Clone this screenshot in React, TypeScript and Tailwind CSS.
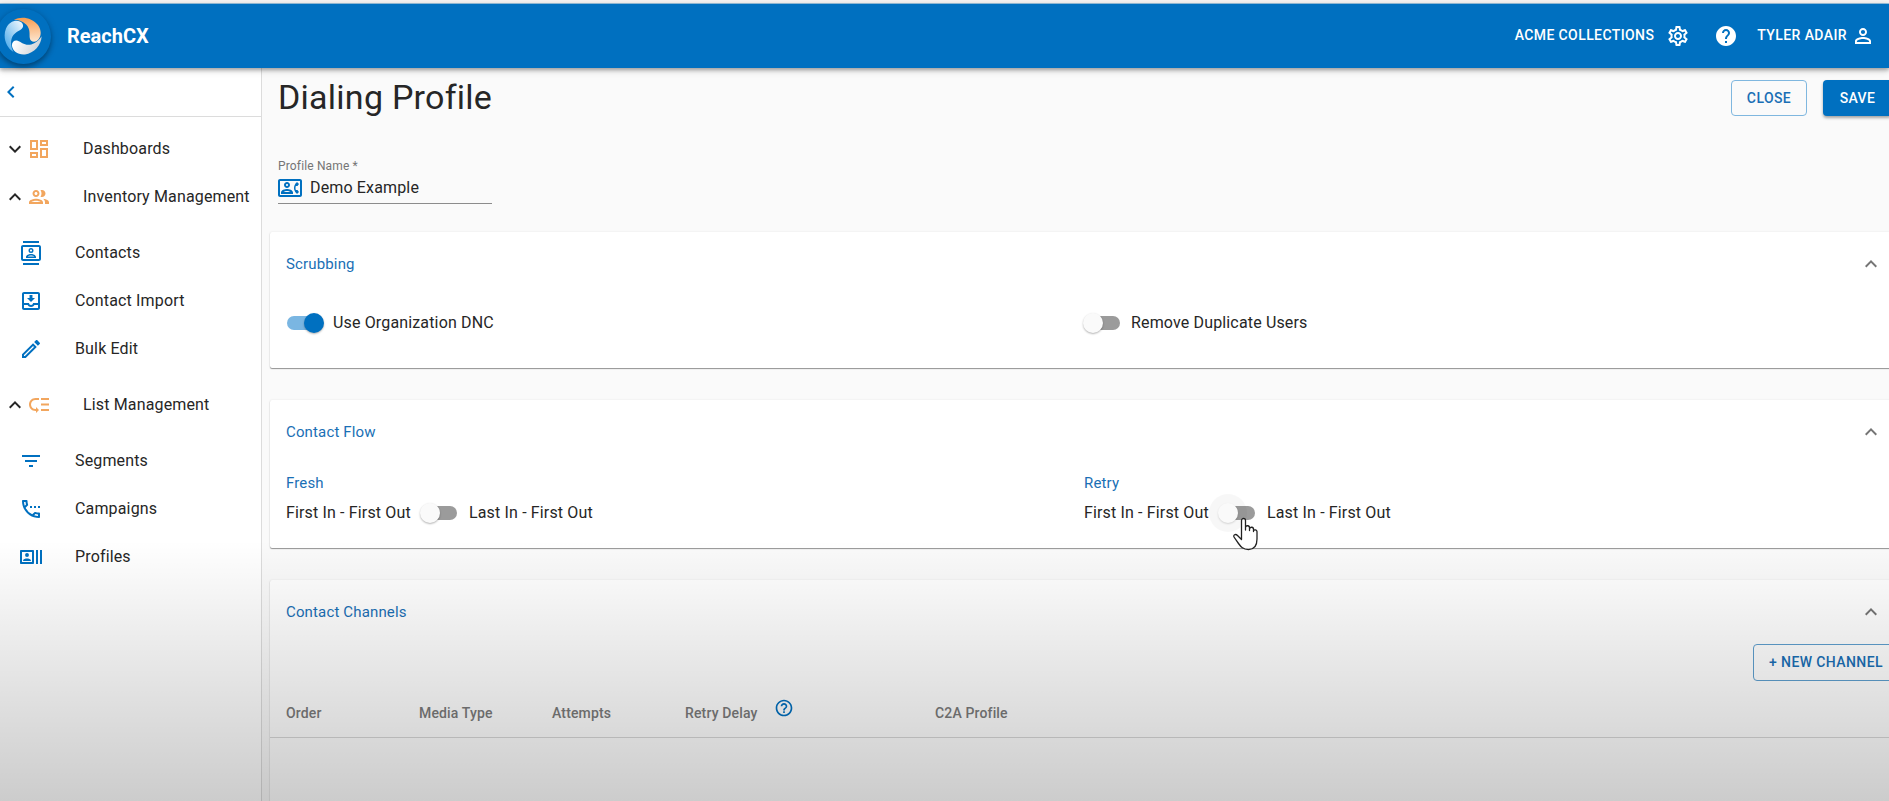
import { useState } from 'react';
import {
  MdChevronLeft,
  MdExpandLess,
  MdExpandMore,
  MdFilterList,
  MdHelp,
  MdHelpOutline,
  MdOutlineContactPhone,
  MdOutlineContacts,
  MdOutlineDashboard,
  MdOutlineEdit,
  MdOutlineGroup,
  MdOutlineLowPriority,
  MdOutlineMoveToInbox,
  MdOutlineRecentActors,
  MdOutlineSettings,
  MdOutlineSettingsPhone,
  MdPersonOutline,
} from 'react-icons/md';
import type { IconType } from 'react-icons';

type NavItem = { label: string; icon: IconType };
type NavGroup = NavItem & { open: boolean; items: NavItem[] };

const groups: NavGroup[] = [
  { label: 'Dashboards', icon: MdOutlineDashboard, open: false, items: [] },
  {
    label: 'Inventory Management',
    icon: MdOutlineGroup,
    open: true,
    items: [
      { label: 'Contacts', icon: MdOutlineContacts },
      { label: 'Contact Import', icon: MdOutlineMoveToInbox },
      { label: 'Bulk Edit', icon: MdOutlineEdit },
    ],
  },
  {
    label: 'List Management',
    icon: MdOutlineLowPriority,
    open: true,
    items: [
      { label: 'Segments', icon: MdFilterList },
      { label: 'Campaigns', icon: MdOutlineSettingsPhone },
      { label: 'Profiles', icon: MdOutlineRecentActors },
    ],
  },
];

// one blade of the logo, the other two are rotated by 120 degrees
const blade =
  'M9.5 35C2 30.500-1.500 20 2 11.500C5 5 11 2.500 16 4.500C19.500 6 20 10 17.500 12C14.500 14.500 9.500 15.500 7.500 22C6.300 27 7.500 31.500 9.500 35Z';

function Logo() {
  return (
    <div className="-ml-1 flex h-[55px] w-[55px] shrink-0 items-center justify-center rounded-full bg-[#0070c0] pr-0.5 shadow-[0_3px_5px_rgba(0,0,0,0.3),0_1px_8px_rgba(0,0,0,0.15)]">
      <svg width="38" height="38" viewBox="0 0 38 38">
        <defs>
          <linearGradient id="blue" x1="0.8" y1="0" x2="0.1" y2="0.8">
            <stop offset="0" stopColor="#e6f3fc" />
            <stop offset="1" stopColor="#58b0ec" />
          </linearGradient>
          <linearGradient id="orange" x1="0.8" y1="0" x2="0.1" y2="0.8">
            <stop offset="0" stopColor="#fde3cb" />
            <stop offset="1" stopColor="#f8994a" />
          </linearGradient>
          <linearGradient id="silver" x1="0.8" y1="0" x2="0.1" y2="0.8">
            <stop offset="0" stopColor="#ffffff" />
            <stop offset="1" stopColor="#cfd3d8" />
          </linearGradient>
        </defs>
        <path d={blade} fill="url(#blue)" />
        <path d={blade} fill="url(#orange)" transform="rotate(120 19 19)" />
        <path d={blade} fill="url(#silver)" transform="rotate(240 19 19)" />
      </svg>
    </div>
  );
}

function Switch({ defaultOn = false, hovered = false }: { defaultOn?: boolean; hovered?: boolean }) {
  const [on, setOn] = useState(defaultOn);
  return (
    <button
      type="button"
      role="switch"
      aria-checked={on}
      onClick={() => setOn(!on)}
      className={`flex h-3.5 w-[34px] shrink-0 items-center rounded-full ${on ? 'justify-end bg-[#7ab6e2]' : 'justify-start bg-[#9b9b9b]'}`}
    >
      <span
        className={`h-5 w-5 shrink-0 rounded-full ${on ? '-mr-[3px] bg-[#0070c0]' : '-ml-[3px] bg-[#fafafa]'} ${
          hovered
            ? 'shadow-[0_0_0_9px_rgba(0,0,0,0.03),0_1px_2px_rgba(0,0,0,0.15)]'
            : 'shadow-[0_1px_2px_rgba(0,0,0,0.3)]'
        }`}
      />
    </button>
  );
}

function Panel({ title, className, children }: { title: string; className: string; children: React.ReactNode }) {
  return (
    <section className={`ml-2 rounded-xs bg-white shadow-[0_1px_1px_rgba(0,0,0,0.4),0_0_2px_rgba(0,0,0,0.1)] ${className}`}>
      <div className="flex h-16 items-center justify-between pr-[29px] pl-4">
        <h2 className="text-[15px] tracking-[0.15px] text-[#1a6fb5]">{title}</h2>
        <MdExpandLess className="text-2xl text-[#757575]" />
      </div>
      {children}
    </section>
  );
}

function FlowColumn({ title, hovered }: { title: string; hovered?: boolean }) {
  return (
    <div>
      <h3 className="h-6 text-[15px] leading-6 tracking-[0.15px] text-[#1a6fb5]">{title}</h3>
      <div className="mt-1.5 flex h-6 items-center">
        <span className="w-[137px]">First In - First Out</span>
        <Switch hovered={hovered} />
        <span className="ml-3">Last In - First Out</span>
      </div>
    </div>
  );
}

export default function App() {
  const [name, setName] = useState('Demo Example');

  return (
    <div className="relative flex h-[801px] w-[1889px] flex-col overflow-hidden bg-[#fafafa] font-['Roboto',sans-serif] text-base tracking-[0.15px] text-[#262626]">
      <div className="h-1 shrink-0 border-b border-[#9cc5e2] bg-[#f5f3f2]" />
      <header className="z-10 flex h-16 shrink-0 items-center bg-[#0070c0] pr-3.5 text-white shadow-[0_2px_4px_rgba(0,0,0,0.3),0_2px_8px_rgba(0,0,0,0.15)]">
        <Logo />
        <span className="ml-4 text-xl font-bold tracking-normal">ReachCX</span>
        <div className="ml-auto flex items-center text-sm font-medium tracking-[0.4px]">
          <span className="pb-0.5">ACME COLLECTIONS</span>
          <MdOutlineSettings className="ml-3 text-2xl" />
          <MdHelp className="ml-6 text-2xl" />
          <span className="ml-[19px] pb-0.5">TYLER ADAIR</span>
          <MdPersonOutline className="ml-1 text-2xl" />
        </div>
      </header>

      <div className="flex min-h-0 flex-1">
        <aside className="w-[262px] shrink-0 border-r border-[#dcdcdc] bg-white">
          <div className="flex h-[49px] items-center border-b border-[#dcdcdc]">
            <MdChevronLeft className="-ml-px text-2xl text-[#0070c0]" />
          </div>
          <nav className="pt-2">
            {groups.map(group => (
              <div key={group.label} className="flex flex-col">
                <div className="flex h-12 items-center pl-[3px]">
                  {group.open ? <MdExpandLess className="text-2xl" /> : <MdExpandMore className="text-2xl" />}
                  <group.icon className="text-2xl text-[#f2a65e]" />
                  <span className="ml-8 whitespace-nowrap">{group.label}</span>
                </div>
                {group.open && (
                  <div className="py-2">
                    {group.items.map(item => (
                      <div key={item.label} className="flex h-12 items-center pl-[19px]">
                        <item.icon className="text-2xl text-[#0070c0]" />
                        <span className="ml-8">{item.label}</span>
                      </div>
                    ))}
                  </div>
                )}
              </div>
            ))}
          </nav>
        </aside>

        <main className="w-[1650px] shrink-0">
          <div className="flex h-[60px] items-center pl-4">
            <h1 className="pb-0.5 text-[34px] leading-10 tracking-[0.25px]">Dialing Profile</h1>
            <button className="ml-auto h-9 w-[76px] rounded border border-[#7fb7df] pb-px text-sm font-medium tracking-[0.4px] text-[#1a6fb5]">
              CLOSE
            </button>
            <button className="mr-5 ml-4 h-9 w-[69px] rounded bg-[#0070c0] pb-px text-sm font-medium tracking-[0.4px] text-white shadow-[0_2px_3px_rgba(0,0,0,0.35)]">
              SAVE
            </button>
          </div>

          <div className="mt-[30px] ml-4 h-[46px] w-[214px] border-b border-[#8c8c8c]">
            <label className="block text-xs leading-4 text-[#757575]">Profile Name *</label>
            <div className="flex h-7 items-center gap-2">
              <MdOutlineContactPhone className="text-2xl text-[#0070c0]" />
              <input value={name} onChange={e => setName(e.target.value)} className="w-40 tracking-[0.15px] outline-none" />
            </div>
          </div>

          <Panel title="Scrubbing" className="mt-7 h-[136px]">
            <div className="mt-[15px] grid grid-cols-[799px_1fr] pl-[17px]">
              <label className="flex items-center gap-3">
                <Switch defaultOn /> Use Organization DNC
              </label>
              <label className="flex items-center gap-[11px]">
                <Switch /> Remove Duplicate Users
              </label>
            </div>
          </Panel>

          <Panel title="Contact Flow" className="mt-8 h-[148px]">
            <div className="mt-[7px] grid grid-cols-[798px_1fr] pl-4">
              <FlowColumn title="Fresh" />
              <FlowColumn title="Retry" hovered />
            </div>
          </Panel>

          <Panel title="Contact Channels" className="mt-8 h-[300px]">
            <div className="flex">
              <button className="ml-[1483px] h-[37px] w-[154px] shrink-0 rounded border border-[#5f9fce] pb-0.5 pl-[15px] text-left text-sm font-medium tracking-[0.4px] text-[#1a6fb5]">
                + NEW CHANNEL
              </button>
            </div>
            <div className="mt-[7px] flex h-[50px] items-center border-b border-[#d9d9d9] pl-4 text-sm font-medium text-[#7b7b7b]">
              <span className="w-[133px]">Order</span>
              <span className="w-[133px]">Media Type</span>
              <span className="w-[133px]">Attempts</span>
              <span className="flex w-[250px] items-center gap-4">
                Retry Delay
                <MdHelpOutline className="mb-2.5 text-xl text-[#0070c0]" />
              </span>
              <span>C2A Profile</span>
            </div>
          </Panel>
        </main>
      </div>

      {/* shade over the lower part of the page */}
      <div className="pointer-events-none absolute inset-x-0 bottom-0 z-20 h-[261px] bg-linear-to-b from-black/0 to-black/20" />

      {/* hand cursor */}
      <svg className="pointer-events-none absolute top-[517px] left-[1232px] z-30" width="27" height="34" viewBox="0 0 27 34">
        <path
          d="M9.500 22.500V3.500a2 2 0 0 1 4 0V13V10.500a2 2 0 0 1 4 .5V13.500V12a2 2 0 0 1 4 .5V14.500V13.500a2 2 0 0 1 3.500 1V22C25 29 22 32.500 16.500 32.500C11 32.500 9 30 6.500 26.500L2 20C1 18 3.500 16.500 5.500 18.500Z"
          fill="#fff"
          stroke="#222"
          strokeWidth="1.300"
          strokeLinejoin="round"
        />
      </svg>
    </div>
  );
}
